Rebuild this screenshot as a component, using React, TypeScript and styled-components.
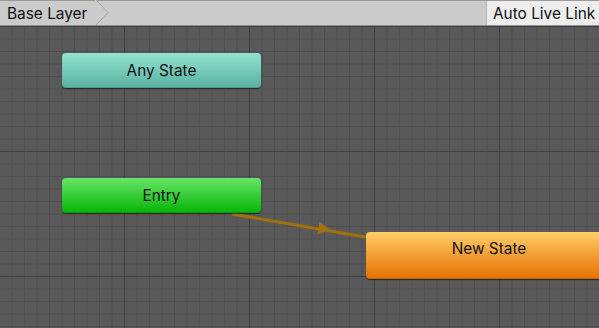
import React from "react";
import styled, { createGlobalStyle } from "styled-components";

const Global = createGlobalStyle`
  html, body { margin: 0; padding: 0; width: 599px; height: 328px; overflow: hidden; background: #595959; }
  body { font-family: Inter, "Noto Sans", sans-serif; }
`;

const Window = styled.div`
  width: 599px;
  height: 328px;
  display: flex;
  flex-direction: column;
`;

const Toolbar = styled.div`
  flex: none;
  display: flex;
  align-items: stretch;
  background: #cbcbcb;
  border-top: 1px solid #9a9a9a;
  border-bottom: 1px solid #8f8f8f;
  box-sizing: border-box;
  height: 26px;
`;

const Crumb = styled.div`
  position: relative;
  display: flex;
  align-items: center;
  padding: 0 0 0 7px;
  font-size: 15.4px;
  color: #101010;
  width: 90px;
`;

const CrumbArrow = styled.svg`
  position: absolute;
  right: -12px;
  top: -1px;
`;

const Spacer = styled.div`
  flex: 1;
`;

const ToolButton = styled.div`
  display: flex;
  align-items: center;
  padding: 0 0 0 6px;
  background: #ededed;
  border-left: 1px solid #b5b5b5;
  font-size: 15.4px;
  color: #101010;
  width: 106px;
`;

const Canvas = styled.div`
  position: relative;
  flex: 1;
  overflow: hidden;
  background-color: #595959;
  background-image:
    linear-gradient(to right, #404040 1px, transparent 1px),
    linear-gradient(to bottom, #404040 1px, transparent 1px),
    linear-gradient(to right, #4f4f4f 1px, transparent 1px),
    linear-gradient(to bottom, #4f4f4f 1px, transparent 1px);
  background-size: 125px 125px, 125px 125px, 12.5px 12.5px, 12.5px 12.5px;
  background-position: -1px 0px, -1px 0px, -1px 0px, -1px 0px;
`;

const Node = styled.div<{ $top: string; $bottom: string; $x: number; $y: number; $w: number; $h: number; $lift?: number }>`
  position: absolute;
  left: ${(p) => p.$x}px;
  top: ${(p) => p.$y}px;
  width: ${(p) => p.$w}px;
  height: ${(p) => p.$h}px;
  padding-bottom: ${(p) => p.$lift ?? 0}px;
  box-sizing: border-box;
  border-radius: 4px;
  background: linear-gradient(to bottom, ${(p) => p.$top}, ${(p) => p.$bottom});
  box-shadow: 0 1px 1px rgba(0, 0, 0, 0.55), inset 0 -1px 0 rgba(0, 0, 0, 0.12);
  display: flex;
  align-items: center;
  justify-content: center;
  font-size: 15.4px;
  color: #111;
`;

const Wire = styled.svg`
  position: absolute;
  left: 0;
  top: 0;
`;

export default function App() {
  return (
    <Window>
      <Global />
      <Toolbar>
        <Crumb>
          Base Layer
          <CrumbArrow width="14" height="26" viewBox="0 0 14 26">
            <polygon points="0,0 1,0 13,12.5 1,25 0,25" fill="#cbcbcb" />
            <polyline points="1,0 13,12.5 1,25" fill="none" stroke="#a6a6a6" strokeWidth="1" />
          </CrumbArrow>
        </Crumb>
        <Spacer />
        <ToolButton>Auto Live Link</ToolButton>
      </Toolbar>
      <Canvas>
        <Wire width="599" height="302" viewBox="0 0 599 302">
          <line x1="232" y1="188" x2="368" y2="211.5" stroke="#a2700d" strokeWidth="3" />
          <polygon points="330,203.5 319.5,196 317.5,208.5" fill="#a2700d" />
        </Wire>
        <Node $x={62} $y={27} $w={199} $h={35} $top="#90e4d0" $bottom="#5ab19f">
          Any State
        </Node>
        <Node $x={62} $y={152} $w={199} $h={35} $top="#68e468" $bottom="#05b505">
          Entry
        </Node>
        <Node $x={366} $y={206} $w={246} $h={47} $lift={14} $top="#ffcd68" $bottom="#e57000">
          New State
        </Node>
      </Canvas>
    </Window>
  );
}
